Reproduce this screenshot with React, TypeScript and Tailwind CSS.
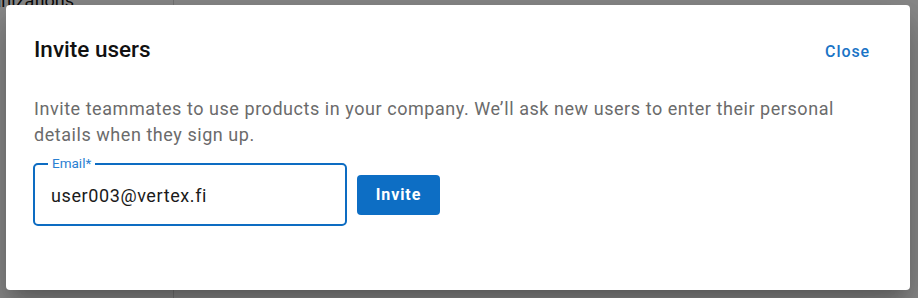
import React from 'react'

const font = { fontFamily: 'Roboto, "Noto Sans", sans-serif' }

function EmailField() {
  return (
    <div className="relative h-[62px] w-[314px] shrink-0">
      {/* outlined border with notch */}
      <fieldset className="absolute inset-x-0 -top-[7px] bottom-0 m-0 rounded-[5px] border-2 border-[#0d6cc2] pl-[13px] pr-[12px]">
        <legend className="px-[4px] text-[13.5px] leading-none text-[#2a80d2]">Email*</legend>
      </fieldset>
      <input
        className="absolute inset-0 bg-transparent px-[18px] text-[18px] tracking-[0.6px] text-[#1a1a1a] outline-none"
        defaultValue="user003@vertex.fi"
      />
    </div>
  )
}

export default function App() {
  return (
    <div className="relative h-[298px] w-[918px] overflow-hidden bg-white" style={font}>
      {/* page behind the dialog */}
      <div className="flex h-full">
        <div className="w-[174px] shrink-0 overflow-hidden border-r border-[#d8d8d8]">
          <div className="-ml-[37px] -mt-[13px] text-[18px] text-[#111]">Organizations</div>
        </div>
        <div className="flex-1" />
      </div>

      {/* backdrop */}
      <div className="absolute inset-0 bg-black/[0.46]" />

      {/* dialog */}
      <div className="absolute left-[6px] top-[5px] flex h-[285px] w-[904px] flex-col rounded-[4px] bg-white pl-[27px] pr-[28px] pt-[26px] shadow-[0_11px_15px_-7px_rgba(0,0,0,0.2),0_24px_38px_3px_rgba(0,0,0,0.14),0_9px_46px_8px_rgba(0,0,0,0.12)]">
        <div className="flex items-center justify-between">
          <h2 className="ml-px text-[22.5px] font-medium leading-[36px] text-[#111]">Invite users</h2>
          <button className="mr-[12px] mt-[6px] text-[16px] font-medium tracking-[0.9px] text-[#1a74c6]">
            Close
          </button>
        </div>

        <p className="ml-px mt-[29px] text-[18px] leading-[26px] tracking-[0.55px] text-[#6b6b6b]">
          Invite teammates to use products in your company. We’ll ask new users to enter their personal details when they sign up.
        </p>

        <div className="mt-[16px] flex items-center gap-[10px]">
          <EmailField />
          <button className="h-[40px] w-[83px] rounded-[4px] bg-[#0d6ec4] text-[16px] font-bold tracking-[0.9px] text-white">
            Invite
          </button>
        </div>
      </div>
    </div>
  )
}
